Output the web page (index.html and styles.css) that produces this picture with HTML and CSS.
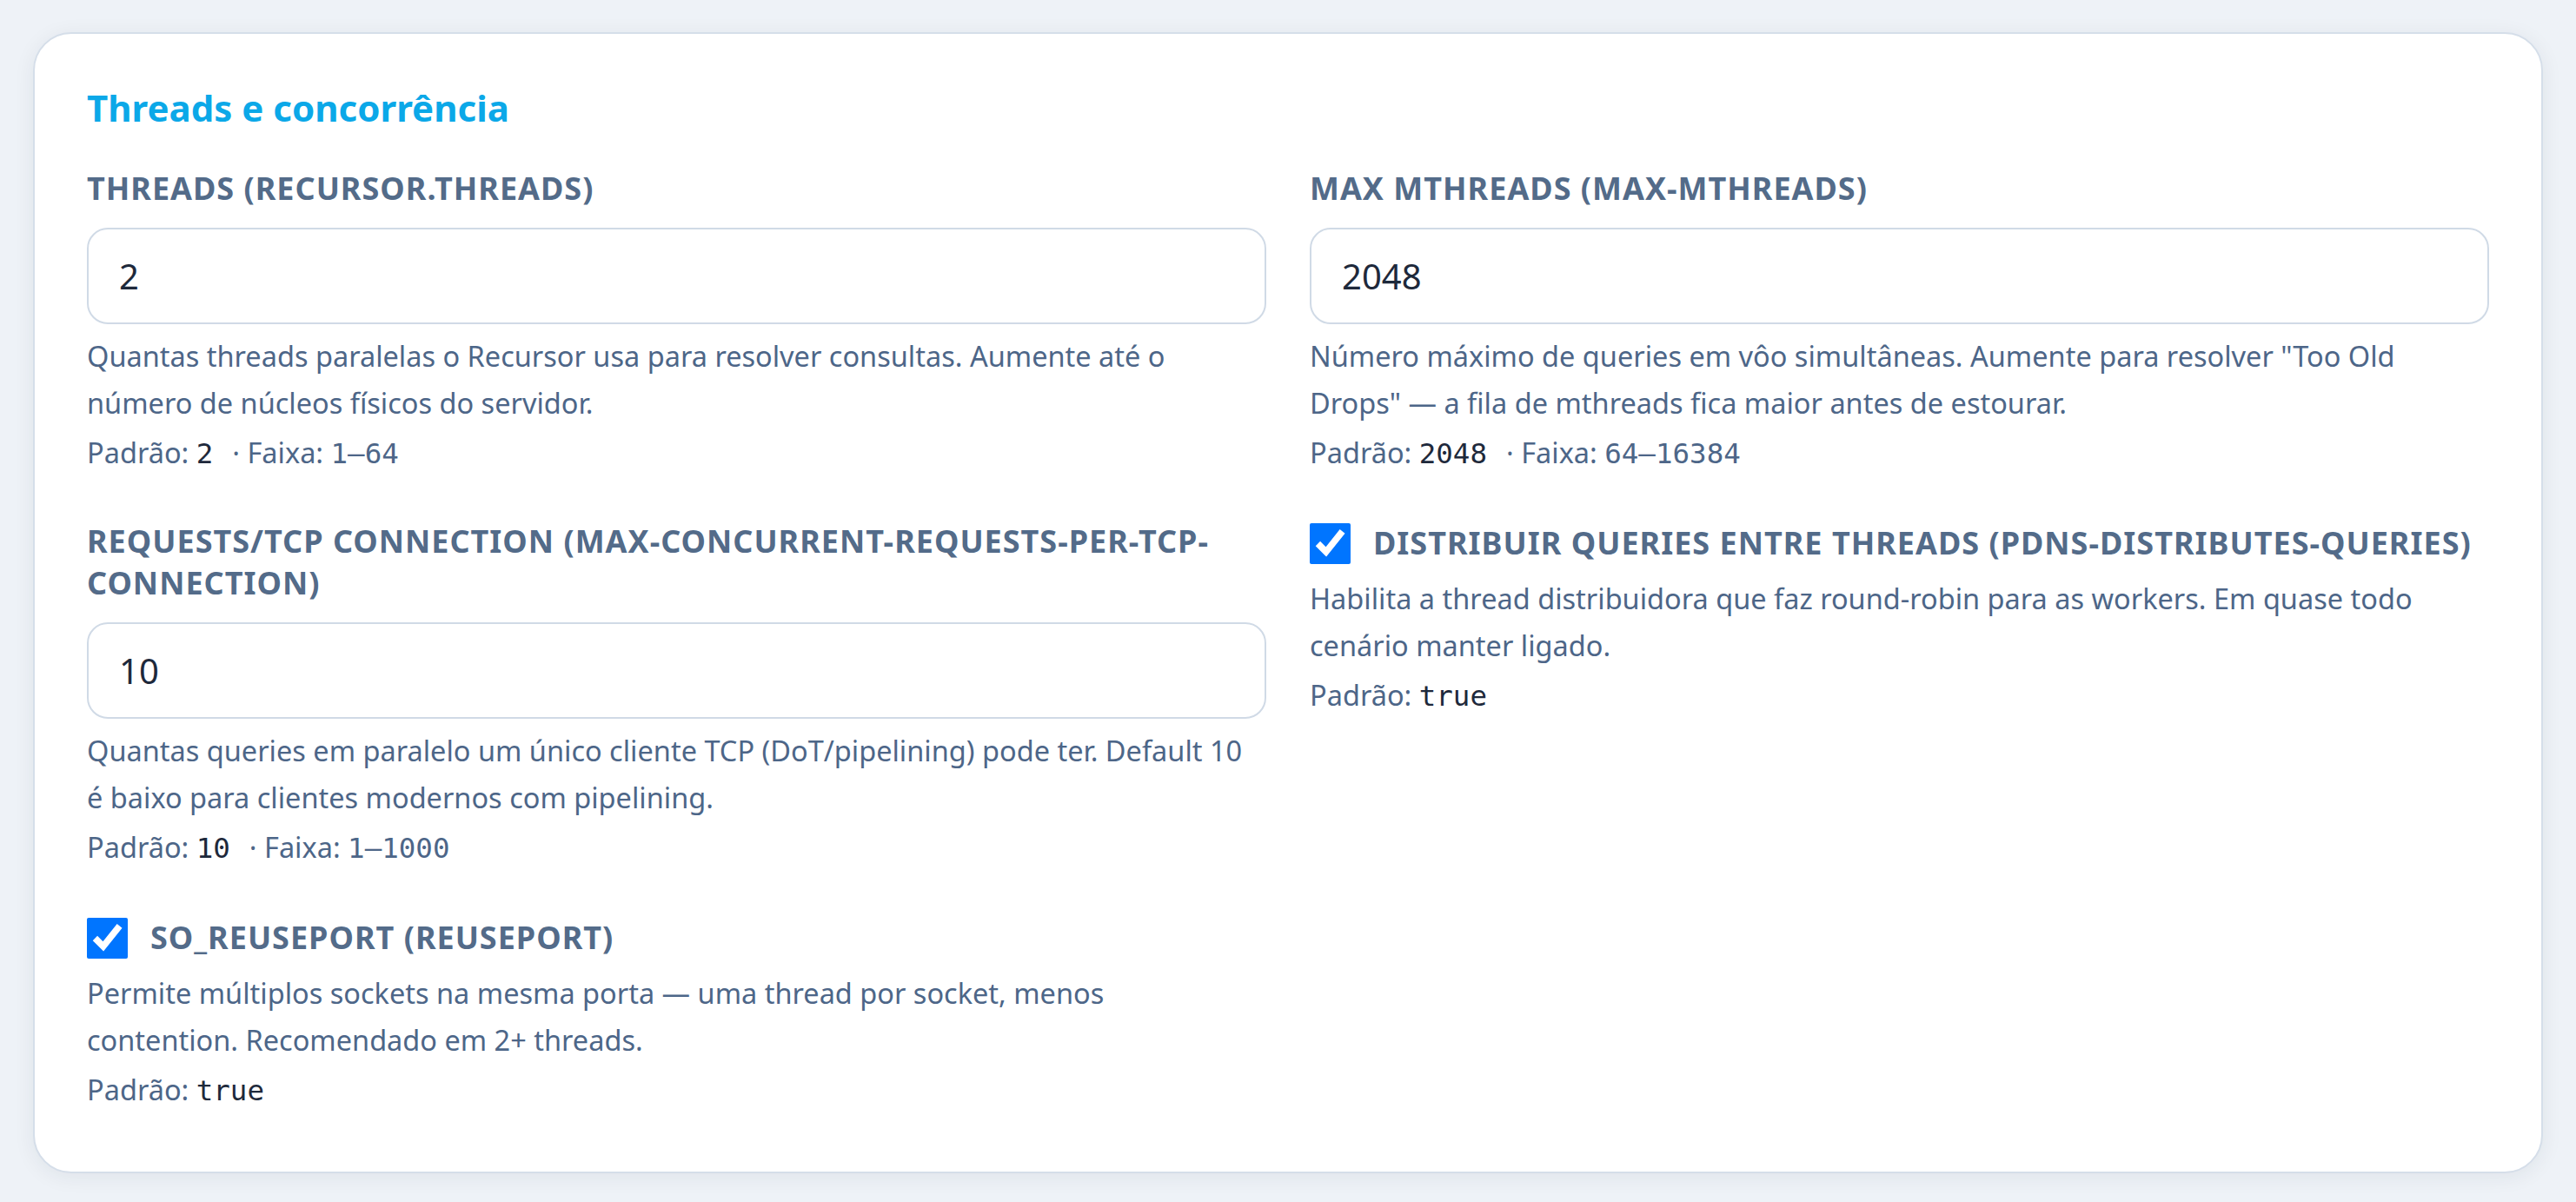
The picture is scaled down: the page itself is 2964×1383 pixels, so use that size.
FILE: index.html
```html
<!DOCTYPE html>
<html lang="pt-BR">
<head>
	<meta charset="UTF-8">
	<title>Threads e concorrência</title>
	<link rel="stylesheet" href="styles.css">
</head>
<body>
	<div class="card">
		<h2 class="card-title">Threads e concorrência</h2>
		<div class="fields">
			<div class="field">
				<label class="field-label" for="threads">Threads (recursor.threads)</label>
				<input class="field-input" id="threads" type="text" value="2">
				<p class="field-help">Quantas threads paralelas o Recursor usa para resolver consultas. Aumente até o número de núcleos físicos do servidor.</p>
				<p class="field-meta">Padrão: <code class="val">2</code><span class="range">· Faixa: <code>1–64</code></span></p>
			</div>
			<div class="field">
				<label class="field-label" for="mthreads">Max mthreads (max-mthreads)</label>
				<input class="field-input" id="mthreads" type="text" value="2048">
				<p class="field-help">Número máximo de queries em vôo simultâneas. Aumente para resolver "Too Old Drops" — a fila de mthreads fica maior antes de estourar.</p>
				<p class="field-meta">Padrão: <code class="val">2048</code><span class="range">· Faixa: <code>64–16384</code></span></p>
			</div>
			<div class="field">
				<label class="field-label" for="tcpreq">Requests/TCP connection (max-concurrent-requests-per-tcp-connection)</label>
				<input class="field-input" id="tcpreq" type="text" value="10">
				<p class="field-help">Quantas queries em paralelo um único cliente TCP (DoT/pipelining) pode ter. Default 10 é baixo para clientes modernos com pipelining.</p>
				<p class="field-meta">Padrão: <code class="val">10</code><span class="range">· Faixa: <code>1–1000</code></span></p>
			</div>
			<div class="field check-field">
				<label class="check-row">
					<input class="check" type="checkbox" checked>
					<span class="field-label">Distribuir queries entre threads (pdns-distributes-queries)</span>
				</label>
				<p class="field-help">Habilita a thread distribuidora que faz round-robin para as workers. Em quase todo cenário manter ligado.</p>
				<p class="field-meta">Padrão: <code class="val">true</code></p>
			</div>
			<div class="field check-field">
				<label class="check-row">
					<input class="check" type="checkbox" checked>
					<span class="field-label">so_reuseport (reuseport)</span>
				</label>
				<p class="field-help">Permite múltiplos sockets na mesma porta — uma thread por socket, menos contention. Recomendado em 2+ threads.</p>
				<p class="field-meta">Padrão: <code class="val">true</code></p>
			</div>
		</div>
	</div>
</body>
</html>
```

FILE: styles.css
```css
*{
	margin: 0;
	padding: 0;
	box-sizing: border-box;
}
body{
	background-color: #eef2f7;
	font-family: "Noto Sans", "Open Sans", sans-serif;
	padding: 37px 38px 35px;
}
.card{
	background-color: #fff;
	border: 2px solid #d5dee9;
	border-radius: 44px;
	padding: 55px 60px 66px;
	box-shadow: 0 4px 24px rgba(30,41,59,0.07);
}
.card-title{
	font-size: 42px;
	line-height: 60px;
	font-weight: 700;
	color: #0ba8e8;
	margin-bottom: 39px;
}
.fields{
	display: grid;
	grid-template-columns: 1fr 1fr;
	column-gap: 50px;
	row-gap: 50px;
}
.field-label{
	display: block;
	font-size: 36px;
	line-height: 48px;
	font-weight: 700;
	letter-spacing: 1px;
	text-transform: uppercase;
	color: #536b89;
	margin-bottom: 21px;
}
.field-input{
	display: block;
	width: 100%;
	height: 111px;
	padding: 0 35px;
	border: 2px solid #d0dae6;
	border-radius: 24px;
	font-family: "Noto Sans", "Open Sans", sans-serif;
	font-size: 40px;
	color: #1e293b;
	background-color: #fff;
	outline: none;
}
.field-help,
.field-meta{
	font-size: 32.5px;
	line-height: 54px;
	color: #4d6688;
}
.field-help{
	margin-top: 10px;
	padding-right: 16px;
}
.field-meta{
	margin-top: 3px;
}
.field-meta code{
	font-family: "DejaVu Sans Mono", "Liberation Mono", monospace;
	font-size: 32.5px;
}
.field-meta code.val{
	color: #1e293b;
}
.range{
	margin-left: 22px;
}
.check-field{
	padding-top: 2px;
}
.check-row{
	display: flex;
	align-items: center;
	gap: 26px;
	min-height: 48px;
	cursor: pointer;
}
.check-row .field-label{
	margin-bottom: 0;
}
.check{
	flex: none;
	width: 47px;
	height: 47px;
	margin: 0;
}
.check-field .field-help{
	margin-top: 13px;
}
```
